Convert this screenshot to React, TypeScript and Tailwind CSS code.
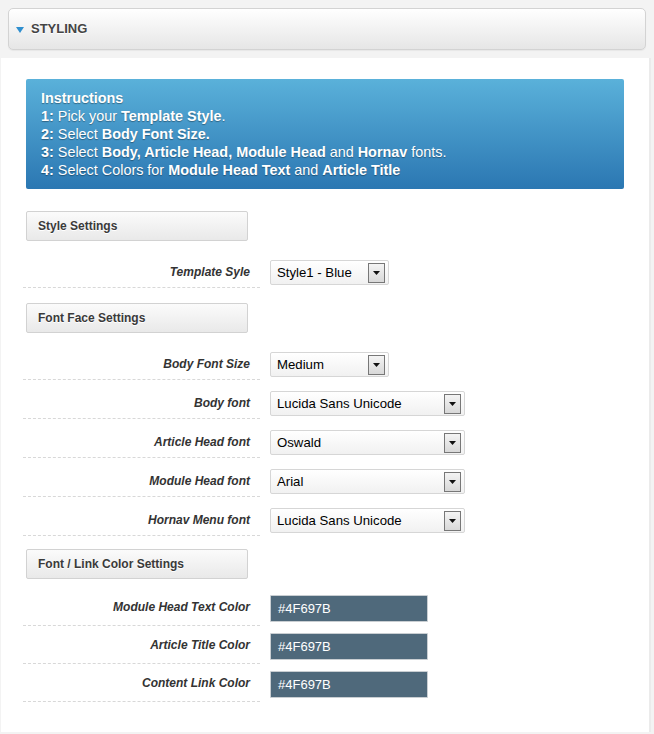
const selectRows = [
  { label: 'Body Font Size', value: 'Medium', wide: false },
  { label: 'Body font', value: 'Lucida Sans Unicode', wide: true },
  { label: 'Article Head font', value: 'Oswald', wide: true },
  { label: 'Module Head font', value: 'Arial', wide: true },
  { label: 'Hornav Menu font', value: 'Lucida Sans Unicode', wide: true },
];

const colorRows = [
  { label: 'Module Head Text Color', value: '#4F697B' },
  { label: 'Article Title Color', value: '#4F697B' },
  { label: 'Content Link Color', value: '#4F697B' },
];

const SectionHead = ({ title }: { title: string }) => (
  <div className="ml-[25px] w-[222px] h-[30px] flex items-center pl-[11px] border border-[#d2d2d2] rounded-[2px] bg-gradient-to-b from-[#fbfbfb] to-[#e9e9e9] text-[12px] font-bold text-[#3a3a3a] [text-shadow:0_1px_0_#fff]">
    {title}
  </div>
);

const FakeSelect = ({ value, wide }: { value: string; wide: boolean }) => (
  <div
    className={`${wide ? 'w-[195px]' : 'w-[119px]'} h-[25px] flex items-center justify-between pl-[6px] pr-[3px] border border-[#d6d6d6] rounded-[2px] bg-gradient-to-b from-white to-[#f1f1f1] text-[13.2px] text-black`}
  >
    <span>{value}</span>
    <span className="w-[17px] h-[20px] border border-[#777] bg-gradient-to-b from-[#f4f4f4] to-[#d8d8d8] flex items-center justify-center">
      <svg width="7" height="4" viewBox="0 0 7 4">
        <path d="M0 0h7L3.5 4z" fill="#111" />
      </svg>
    </span>
  </div>
);

const Row = ({ label, children, h }: { label: string; children: React.ReactNode; h: string }) => (
  <div className={`flex items-start ${h}`}>
    <div className="ml-[22px] w-[237px] h-full border-b border-dashed border-[#d8d8d8] flex justify-end pr-[10px]">
      <span className="text-[12px] font-bold italic text-[#333] mt-[3px]">{label}</span>
    </div>
    <div className="ml-[10px]">{children}</div>
  </div>
);

export default function App() {
  return (
    <div className="w-[654px] h-[734px] bg-[#f3f3f3] font-['Liberation_Sans',Arial,sans-serif] overflow-hidden">
      <div className="px-[8px] pt-[8px] pb-[8px]">
        <div className="h-[42px] border border-[#d3d3d3] rounded-[5px] bg-gradient-to-b from-white to-[#e6e6e6] flex items-center pl-[7px] shadow-[0_1px_1px_rgba(0,0,0,0.05)]">
          <svg width="8" height="6" viewBox="0 0 8 6" className="mt-[1px]">
            <path d="M0 0h8L4 6z" fill="#2f8fcf" />
          </svg>
          <span className="ml-[7px] text-[13px] font-bold text-[#444] [text-shadow:0_1px_0_#fff]">STYLING</span>
        </div>
      </div>
      <div className="ml-[1px] w-[650px] h-[674px] bg-white border-r-2 border-[#ebebeb] pt-[21px] flex flex-col">
        <div className="mx-[25px] h-[110px] rounded-[2px] bg-gradient-to-b from-[#5ab1da] to-[#2b77b2] pl-[15px] pt-[10px] text-[14.4px] leading-[18px] text-white [text-shadow:0_1px_1px_rgba(0,0,0,0.35)]">
          <div className="font-bold">Instructions</div>
          <div><b>1:</b> Pick your <b>Template Style</b>.</div>
          <div><b>2:</b> Select <b>Body Font Size.</b></div>
          <div><b>3:</b> Select <b>Body, Article Head, Module Head</b> and <b>Hornav</b> fonts.</div>
          <div><b>4:</b> Select Colors for <b>Module Head Text</b> and <b>Article Title</b></div>
        </div>

        <div className="mt-[22px]">
          <SectionHead title="Style Settings" />
        </div>
        <div className="mt-[19px]">
          <Row label="Template Syle" h="h-[28px]">
            <FakeSelect value="Style1 - Blue" wide={false} />
          </Row>
        </div>

        <div className="mt-[15px]">
          <SectionHead title="Font Face Settings" />
        </div>
        <div className="mt-[19px] flex flex-col gap-[11px]">
          {selectRows.map((r) => (
            <Row key={r.label} label={r.label} h="h-[28px]">
              <FakeSelect value={r.value} wide={r.wide} />
            </Row>
          ))}
        </div>

        <div className="mt-[13px]">
          <SectionHead title="Font / Link Color Settings" />
        </div>
        <div className="mt-[16px] flex flex-col gap-[7px]">
          {colorRows.map((r) => (
            <Row key={r.label} label={r.label} h="h-[31px]">
              <div className="w-[158px] h-[27px] bg-[#4f697b] border border-[#c9ced2] rounded-[1px] flex items-center pl-[7px] text-[13px] text-white">
                {r.value}
              </div>
            </Row>
          ))}
        </div>
      </div>
    </div>
  );
}
